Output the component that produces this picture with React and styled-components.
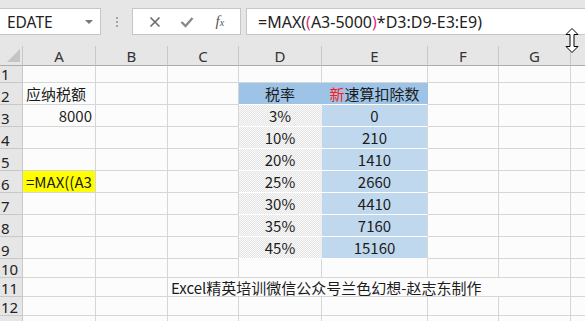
import React from "react";
import styled, { createGlobalStyle } from "styled-components";

const COLS = [
  { key: "A", w: 73 },
  { key: "B", w: 72 },
  { key: "C", w: 71 },
  { key: "D", w: 83 },
  { key: "E", w: 106 },
  { key: "F", w: 71 },
  { key: "G", w: 72 },
  { key: "H", w: 72 },
];

const ROW_H = [17, 22, 22, 22, 22, 22, 22, 22, 22, 19, 19, 19, 19];

const rates = [
  ["3%", "0"],
  ["10%", "210"],
  ["20%", "1410"],
  ["25%", "2660"],
  ["30%", "4410"],
  ["35%", "7160"],
  ["45%", "15160"],
];

// cell content keyed by row number
function buildData() {
  const data = {
    2: {
      A: { text: "应纳税额" },
      D: { text: "税率", tone: "head", align: "center" },
      E: {
        text: (
          <>
            <Red>新</Red>速算扣除数
          </>
        ),
        tone: "head",
        align: "center",
      },
    },
    3: { A: { text: "8000", align: "right" } },
    6: { A: { text: "=MAX((A3", tone: "yellow" } },
  };
  rates.forEach(([r, d], i) => {
    const row = i + 3;
    data[row] = {
      ...(data[row] || {}),
      D: { text: r, tone: "rate", align: "center" },
      E: { text: d, tone: "deduct", align: "center" },
    };
  });
  return data;
}

const GlobalStyle = createGlobalStyle`
  html, body {
    margin: 0;
    padding: 0;
    background: #fcfcfc;
    overflow: hidden;
  }
  body {
    font-family: "Noto Sans", "Noto Sans CJK SC", sans-serif;
  }
`;

export default function App() {
  const data = buildData();
  const rows = ROW_H.map((h, i) => i + 1);
  return (
    <Page>
      <GlobalStyle />
      <Toolbar>
        <NameBox>
          <span>EDATE</span>
          <DropArrow />
        </NameBox>
        <Grip>
          <i />
          <i />
          <i />
        </Grip>
        <ButtonBox>
          <IconBtn>
            <svg width="12" height="12" viewBox="0 0 12 12">
              <path d="M1.5 1.5 L10.5 10.5 M10.5 1.5 L1.5 10.5" stroke="#6a6a6a" strokeWidth="1.6" />
            </svg>
          </IconBtn>
          <IconBtn>
            <svg width="14" height="12" viewBox="0 0 14 12">
              <path d="M1.5 6 L5.5 10 L12.5 2" fill="none" stroke="#8a8a8a" strokeWidth="2.4" />
            </svg>
          </IconBtn>
          <Fx>
            f<sub>x</sub>
          </Fx>
        </ButtonBox>
        <FormulaBox>
          =MAX(<Paren>(</Paren>A3-5000<Paren>)</Paren>*D3:D9-E3:E9)
        </FormulaBox>
      </Toolbar>

      <Sheet>
        <Corner>
          <svg width="13" height="13" viewBox="0 0 13 13">
            <path d="M13 0 L13 13 L0 13 Z" fill="#c4c4c4" />
          </svg>
        </Corner>
        {COLS.map((c) => (
          <ColHead key={c.key}>{c.key}</ColHead>
        ))}

        {rows.map((r) => (
          <React.Fragment key={r}>
            <RowHead>{r}</RowHead>
            {r === 11 ? (
              <>
                <Cell />
                <Cell />
                <SpanCell $span={4}>Excel精英培训微信公众号兰色幻想-赵志东制作</SpanCell>
                <Cell />
                <Cell />
              </>
            ) : (
              COLS.map((c) => {
                const cell = (data[r] || {})[c.key];
                return (
                  <Cell key={c.key} $tone={cell?.tone} $align={cell?.align}>
                    {cell?.text}
                  </Cell>
                );
              })
            )}
          </React.Fragment>
        ))}
      </Sheet>

      <Pointer>
        <svg width="14" height="25" viewBox="0 0 14 25">
          <path
            d="M7 0.5 L13 6.5 L9 6.5 L9 18.5 L13 18.5 L7 24.5 L1 18.5 L5 18.5 L5 6.5 L1 6.5 Z"
            fill="#fff"
            stroke="#000"
            strokeWidth="1"
          />
        </svg>
      </Pointer>
    </Page>
  );
}

const Page = styled.div`
  position: relative;
  width: 585px;
  height: 321px;
  overflow: hidden;
  background: #fcfcfc;
`;

const Toolbar = styled.div`
  display: flex;
  align-items: flex-start;
  height: 46px;
  padding-top: 8px;
  box-sizing: border-box;
  background: #e6e6e6;
`;

const Box = styled.div`
  height: 27px;
  box-sizing: border-box;
  background: #fff;
  border: 1px solid #c6c6c6;
  display: flex;
  align-items: center;
`;

const NameBox = styled(Box)`
  width: 101px;
  border-left: none;
  padding: 0 7px 0 7px;
  justify-content: space-between;
  font-size: 15.5px;
  color: #222;
`;

const DropArrow = styled.span`
  width: 0;
  height: 0;
  border-left: 4px solid transparent;
  border-right: 4px solid transparent;
  border-top: 4px solid #777;
  margin-top: 1px;
`;

const Grip = styled.div`
  width: 31px;
  height: 27px;
  display: flex;
  flex-direction: column;
  align-items: center;
  justify-content: center;
  gap: 2px;
  i {
    width: 2px;
    height: 2px;
    background: #a4a4a4;
  }
`;

const ButtonBox = styled(Box)`
  width: 109px;
  justify-content: space-around;
  padding: 0 4px 0 6px;
`;

const IconBtn = styled.div`
  width: 24px;
  display: flex;
  justify-content: center;
  align-items: center;
`;

const Fx = styled.div`
  font-family: "Liberation Serif", serif;
  font-style: italic;
  font-size: 15px;
  color: #555;
  width: 24px;
  text-align: center;
  sub {
    font-size: 10px;
    vertical-align: 0;
  }
`;

const FormulaBox = styled(Box)`
  flex: 1;
  margin-left: 5px;
  border-right: none;
  padding-left: 11px;
  font-size: 16px;
  color: #222;
  white-space: nowrap;
`;

const Paren = styled.span`
  color: #d6337f;
`;

const Red = styled.span`
  color: #ff1a1a;
`;

const Sheet = styled.div`
  display: grid;
  grid-template-columns: 23px ${COLS.map((c) => c.w + "px").join(" ")};
  grid-template-rows: 20px ${ROW_H.map((h) => h + "px").join(" ")};
  font-family: "Noto Sans CJK SC", "Noto Sans", sans-serif;
  font-size: 15px;
  color: #1c1c1c;
`;

const Corner = styled.div`
  background: #e6e6e6;
  border-bottom: 1px solid #ababab;
  border-right: 1px solid #c8c8c8;
  display: flex;
  align-items: flex-end;
  justify-content: flex-end;
  padding: 0 2px 3px 0;
`;

const ColHead = styled.div`
  background: #e6e6e6;
  border-bottom: 1px solid #ababab;
  border-right: 1px solid #c8c8c8;
  display: flex;
  align-items: flex-end;
  justify-content: center;
  font-family: "Noto Sans", sans-serif;
  font-size: 15px;
  line-height: 18px;
  color: #333;
`;

const RowHead = styled.div`
  background: #e6e6e6;
  border-bottom: 1px solid #c8c8c8;
  border-right: 1px solid #c8c8c8;
  display: flex;
  align-items: flex-end;
  padding-left: 1px;
  font-family: "Noto Sans", sans-serif;
  font-size: 15px;
  line-height: 16px;
  color: #222;
  overflow: hidden;
`;

const tones = {
  head: "background: #9dc3e6; border-bottom-color: #ffffff; border-right-color: transparent;",
  rate: `background: #efefef repeating-conic-gradient(#e4e4e4 0 25%, #fafafa 0 50%) 0 0 / 2px 2px;
    border-bottom-color: #ffffff; border-right-color: transparent;`,
  deduct: "background: #bfd8ee; border-bottom-color: #ffffff;",
  yellow: "background: #ffff00;",
};

const Cell = styled.div`
  box-sizing: border-box;
  border-bottom: 1px solid #d6d6d6;
  border-right: 1px solid #d6d6d6;
  display: flex;
  align-items: center;
  justify-content: ${({ $align }) =>
    $align === "center" ? "center" : $align === "right" ? "flex-end" : "flex-start"};
  padding: 0 3px;
  white-space: nowrap;
  overflow: hidden;
  line-height: 1;
  ${({ $tone }) => tones[$tone] || ""}
`;

const SpanCell = styled(Cell)`
  grid-column: span ${({ $span }) => $span};
  border-right: none;
  overflow: visible;
`;

const Pointer = styled.div`
  position: absolute;
  left: 565px;
  top: 28px;
  line-height: 0;
`;
